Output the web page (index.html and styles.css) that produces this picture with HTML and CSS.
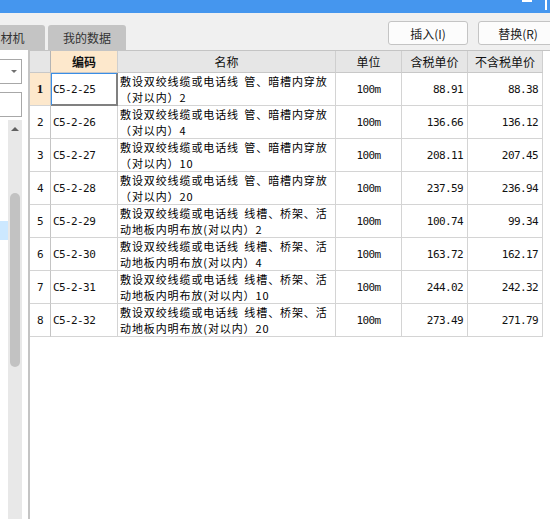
FILE: index.html
```html
<!DOCTYPE html>
<html lang="zh-CN">
<head>
<meta charset="utf-8">
<title>我的数据</title>
<link rel="stylesheet" href="styles.css">
</head>
<body>
<div class="app">
  <div class="titlebar">
    <span class="tb-min"></span>
    <span class="tb-max"></span>
  </div>
  <div class="toolbar">
    <div class="tabs">
      <div class="tab tab-cut">材机</div>
      <div class="tab">我的数据</div>
    </div>
    <div class="buttons">
      <button class="btn">插入(I)</button>
      <button class="btn">替换(R)</button>
    </div>
  </div>
  <div class="main">
    <div class="side">
      <div class="combo"><span class="caret"></span></div>
      <div class="textbox"></div>
      <div class="listarea">
        <div class="list"><div class="sel"></div></div>
        <div class="scrollbar">
          <div class="sb-up"><span class="up-tri"></span></div>
          <div class="thumb"></div>
        </div>
      </div>
    </div>
    <div class="gridpanel">
      <div class="grid">
        <div class="hc hnum"></div>
        <div class="hc hactive">编码</div>
        <div class="hc">名称</div>
        <div class="hc">单位</div>
        <div class="hc">含税单价</div>
        <div class="hc">不含税单价</div>

        <div class="c num numactive">1</div>
        <div class="c code editing">C5-2-25</div>
        <div class="c name"><span class="ln">敷设双绞线缆或电话线 管、暗槽内穿放</span><span class="ln">（对以内）2</span></div>
        <div class="c unit">100m</div>
        <div class="c price">88.91</div>
        <div class="c price">88.38</div>

        <div class="c num">2</div>
        <div class="c code">C5-2-26</div>
        <div class="c name"><span class="ln">敷设双绞线缆或电话线 管、暗槽内穿放</span><span class="ln">（对以内）4</span></div>
        <div class="c unit">100m</div>
        <div class="c price">136.66</div>
        <div class="c price">136.12</div>

        <div class="c num">3</div>
        <div class="c code">C5-2-27</div>
        <div class="c name"><span class="ln">敷设双绞线缆或电话线 管、暗槽内穿放</span><span class="ln">（对以内）10</span></div>
        <div class="c unit">100m</div>
        <div class="c price">208.11</div>
        <div class="c price">207.45</div>

        <div class="c num">4</div>
        <div class="c code">C5-2-28</div>
        <div class="c name"><span class="ln">敷设双绞线缆或电话线 管、暗槽内穿放</span><span class="ln">（对以内）20</span></div>
        <div class="c unit">100m</div>
        <div class="c price">237.59</div>
        <div class="c price">236.94</div>

        <div class="c num">5</div>
        <div class="c code">C5-2-29</div>
        <div class="c name"><span class="ln">敷设双绞线缆或电话线 线槽、桥架、活</span><span class="ln">动地板内明布放(对以内）2</span></div>
        <div class="c unit">100m</div>
        <div class="c price">100.74</div>
        <div class="c price">99.34</div>

        <div class="c num">6</div>
        <div class="c code">C5-2-30</div>
        <div class="c name"><span class="ln">敷设双绞线缆或电话线 线槽、桥架、活</span><span class="ln">动地板内明布放(对以内）4</span></div>
        <div class="c unit">100m</div>
        <div class="c price">163.72</div>
        <div class="c price">162.17</div>

        <div class="c num">7</div>
        <div class="c code">C5-2-31</div>
        <div class="c name"><span class="ln">敷设双绞线缆或电话线 线槽、桥架、活</span><span class="ln">动地板内明布放(对以内）10</span></div>
        <div class="c unit">100m</div>
        <div class="c price">244.02</div>
        <div class="c price">242.32</div>

        <div class="c num">8</div>
        <div class="c code">C5-2-32</div>
        <div class="c name"><span class="ln">敷设双绞线缆或电话线 线槽、桥架、活</span><span class="ln">动地板内明布放(对以内）20</span></div>
        <div class="c unit">100m</div>
        <div class="c price">273.49</div>
        <div class="c price">271.79</div>
      </div>
    </div>
  </div>
</div>
</body>
</html>
```

FILE: styles.css
```css
* { box-sizing: border-box; }

html, body {
  margin: 0;
  padding: 0;
  width: 550px;
  height: 519px;
  overflow: hidden;
  background: #f0f0f0;
  font-family: "Noto Sans CJK SC", "Noto Sans", sans-serif;
  font-size: 12px;
  color: #000;
}

.app {
  width: 550px;
  height: 519px;
  display: flex;
  flex-direction: column;
  overflow: hidden;
}

/* title bar */
.titlebar {
  height: 13px;
  flex: none;
  background: #4596ee;
  display: flex;
  justify-content: flex-end;
  align-items: flex-start;
  padding-right: 3px;
}
.tb-min {
  width: 10px;
  height: 2px;
  background: #fff;
  margin-right: 13px;
}
.tb-max {
  width: 2px;
  height: 10px;
  background: #fff;
}

/* toolbar */
.toolbar {
  height: 37px;
  flex: none;
  display: flex;
  align-items: flex-start;
}
.tabs {
  display: flex;
  gap: 3px;
  padding-top: 12px;
  margin-left: -20px;
}
.tab {
  height: 25px;
  width: 78px;
  background: #c4c4c4;
  border-radius: 3px 3px 0 0;
  color: #333;
  display: flex;
  align-items: center;
  justify-content: center;
  font-size: 12px;
}
.tab-cut { width: 65px; }

.buttons {
  margin-left: auto;
  margin-right: -8px;
  padding-top: 8px;
  display: flex;
  gap: 10px;
}
.btn {
  width: 80px;
  height: 24px;
  border: 1px solid #c4c4c4;
  border-radius: 3px;
  background: #fcfcfc;
  font-family: "Noto Sans CJK SC", "Noto Sans", sans-serif;
  font-size: 12px;
  color: #222;
  padding: 0;
}

/* main area */
.main {
  flex: 1;
  display: flex;
  min-height: 0;
}

.side {
  width: 28px;
  flex: none;
  background: #fff;
  display: flex;
  flex-direction: column;
}
.combo {
  margin-top: 9px;
  margin-left: -3px;
  width: 25px;
  height: 25px;
  border: 1px solid #a8a8a8;
  position: relative;
  background: #fff;
}
.caret {
  position: absolute;
  left: 13px;
  top: 10px;
  width: 0;
  height: 0;
  border-left: 3px solid transparent;
  border-right: 3px solid transparent;
  border-top: 3px solid #707070;
}
.textbox {
  margin-top: 8px;
  margin-left: -3px;
  width: 25px;
  height: 25px;
  border: 1px solid #a8a8a8;
  background: #fff;
}
.listarea {
  margin-top: 3px;
  flex: 1;
  display: flex;
}
.list {
  width: 8px;
  flex: none;
}
.sel {
  margin-top: 101px;
  height: 19px;
  background: #cce8ff;
}
.scrollbar {
  width: 14px;
  flex: none;
  background: #e8e8e8;
  display: flex;
  flex-direction: column;
}
.sb-up {
  height: 17px;
  display: flex;
  justify-content: center;
  align-items: center;
}
.up-tri {
  width: 0;
  height: 0;
  border-left: 4px solid transparent;
  border-right: 4px solid transparent;
  border-bottom: 4px solid #606060;
}
.thumb {
  margin-top: 56px;
  margin-left: 2px;
  width: 10px;
  height: 174px;
  border-radius: 5px;
  background: #c2c2c2;
}

/* grid panel */
.gridpanel {
  flex: 1;
  background: #fff;
  border-left: 2px solid #c4c4c4;
  border-top: 1px solid #c4c4c4;
}
.grid {
  display: grid;
  grid-template-columns: 21px 67px 218px 66px 66px 75px;
  grid-template-rows: 22px repeat(8, 33px);
}
.hc {
  background: #e6e6e6;
  border-right: 1px solid #cfcfcf;
  border-bottom: 1px solid #c8c8c8;
  display: flex;
  align-items: center;
  justify-content: center;
  font-size: 12px;
  color: #111;
}
.hnum { border-right-color: #b4b4b4; }
.hactive {
  background: #fde8cc;
  font-weight: bold;
}

.c {
  border-right: 1px solid #d4d4d4;
  border-bottom: 1px solid #d4d4d4;
  display: flex;
  align-items: center;
  font-family: "DejaVu Sans Mono", "Liberation Mono", monospace;
  font-size: 11px;
  letter-spacing: -0.6px;
  color: #111;
  white-space: nowrap;
}
.num {
  justify-content: center;
  border-right-color: #c4c4c4;
}
.numactive {
  background: #fde8cc;
  font-family: "Liberation Serif", serif;
  font-weight: bold;
  font-size: 13px;
  letter-spacing: 0;
}
.code {
  padding-left: 2px;
}
.editing {
  box-shadow: inset 1px 1px 0 #3a8ee6, inset -1px -1px 0 #808080;
  border-right-color: #808080;
  border-bottom-color: #808080;
}
.name {
  flex-direction: column;
  align-items: flex-start;
  padding: 0 0 0 2px;
  font-family: "Noto Sans CJK SC", "Noto Sans", sans-serif;
  font-size: 11px;
  letter-spacing: 0.9px;
  word-spacing: 2px;
  overflow: hidden;
  color: #000;
}
.ln {
  display: block;
  height: 16px;
  line-height: 16px;
  overflow: hidden;
}
.unit {
  justify-content: center;
}
.price {
  justify-content: flex-end;
  padding-right: 4px;
}
```
